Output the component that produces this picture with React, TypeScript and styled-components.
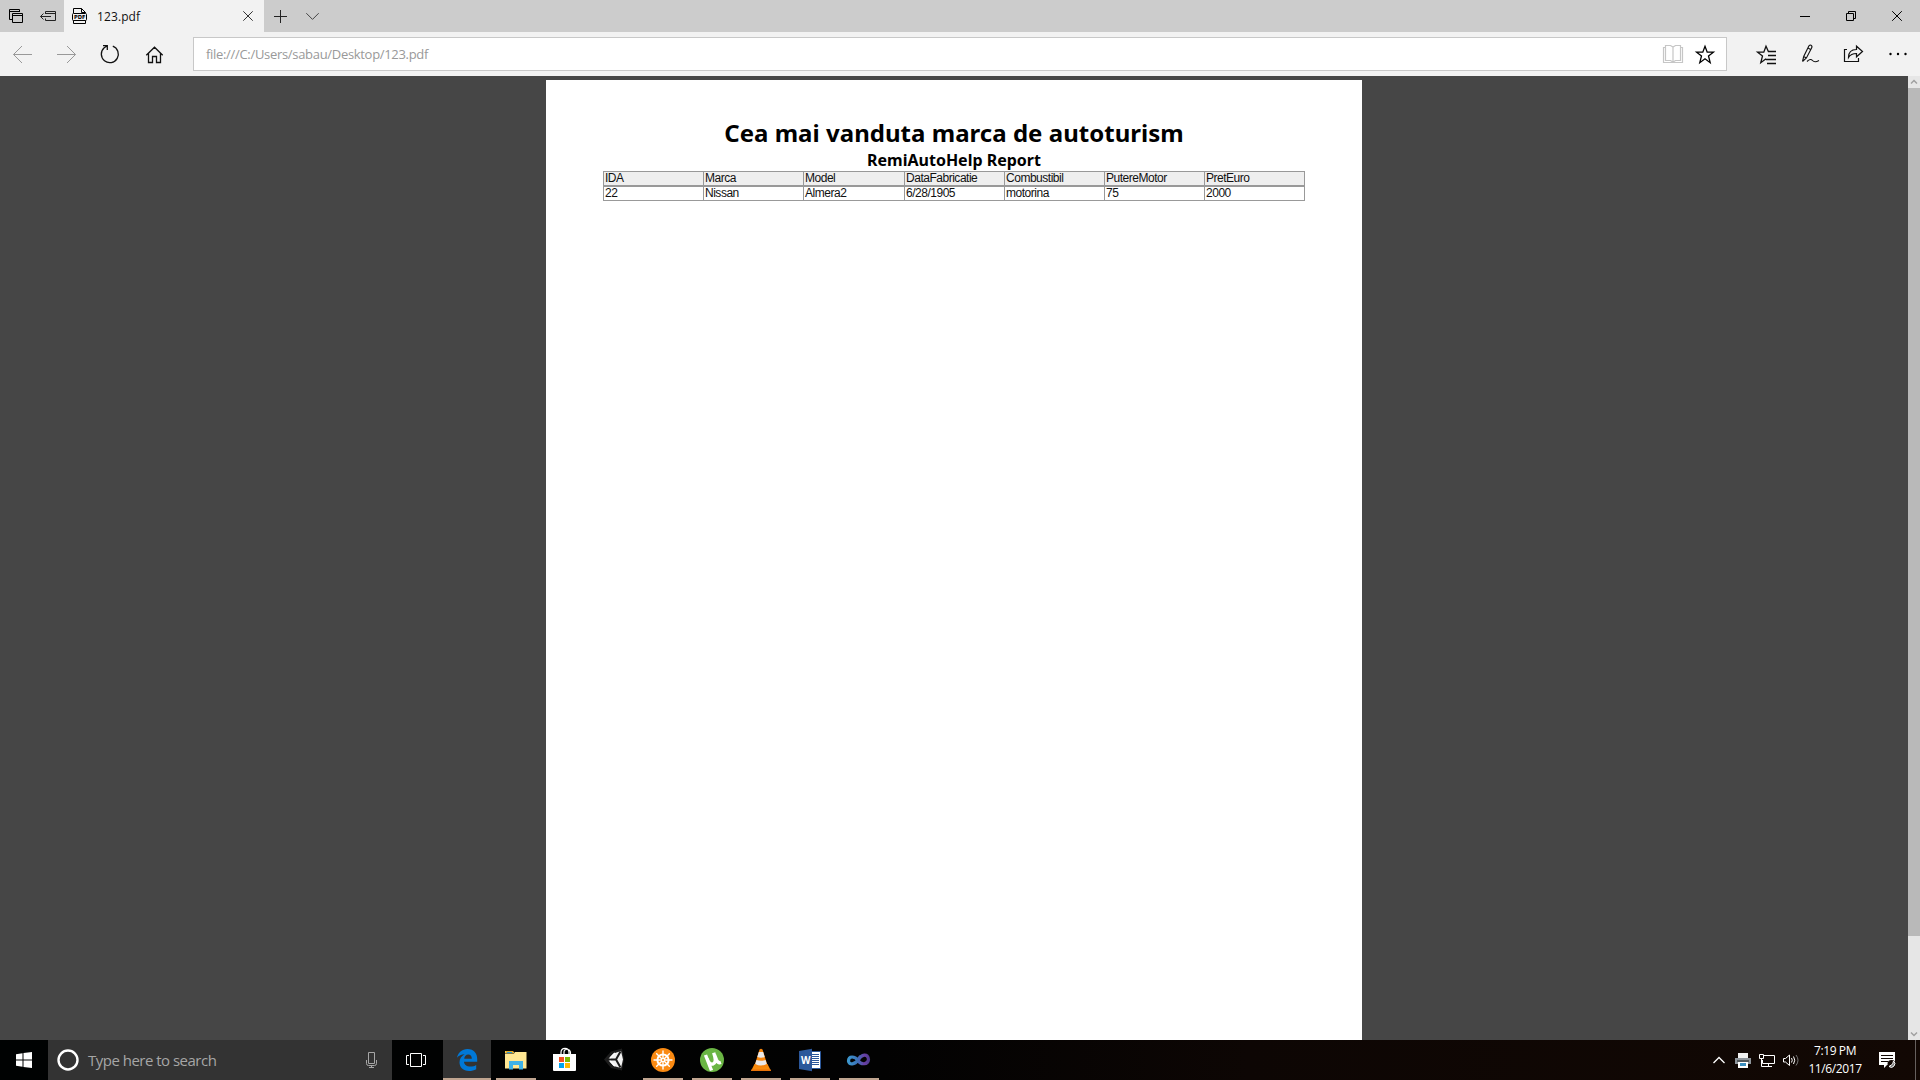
import React from "react";
import styled, { createGlobalStyle } from "styled-components";

const Global = createGlobalStyle`
  html, body { margin: 0; padding: 0; overflow: hidden; background: #464646; }
  * { box-sizing: border-box; }
`;

const ui = `"Open Sans", "Noto Sans", sans-serif`;

const Screen = styled.div`
  width: 1920px;
  height: 1080px;
  display: flex;
  flex-direction: column;
  font-family: ${ui};
  overflow: hidden;
`;

const Art = styled.svg`
  display: block;
  flex: none;
`;

/* Each glyph is drawn in screen coordinates; the view box selects its slot. */
const Glyph = ({ x, y, w, h, children }: { x: number; y: number; w: number; h: number; children: React.ReactNode }) => (
  <Art width={w} height={h} viewBox={`${x} ${y} ${w} ${h}`} fill="none">
    {children}
  </Art>
);

const TabStrip = styled.header`
  height: 32px;
  flex: none;
  display: flex;
  background: #cccccc;
`;

const Tab = styled.div`
  width: 200px;
  display: flex;
  align-items: center;
  background: #f2f2f2;
`;

const TabTitle = styled.span`
  flex: 1;
  font-size: 12px;
  line-height: 16px;
  padding-top: 1px;
  margin-left: -1px;
  letter-spacing: 0.1px;
  color: #111;
  white-space: nowrap;
`;

const Spacer = styled.div`
  flex: 1;
`;

const Toolbar = styled.nav`
  height: 44px;
  flex: none;
  display: flex;
  align-items: center;
  background: #f2f2f2;
`;

const AddressBar = styled.div`
  width: 1534px;
  height: 34px;
  margin: 0 7px 0 17px;
  padding-left: 12px;
  display: flex;
  align-items: center;
  background: #fff;
  border: 1px solid #c8c8c8;
`;

const Url = styled.span`
  flex: 1;
  font-size: 13px;
  line-height: 18px;
  letter-spacing: -0.31px;
  color: #999;
  white-space: nowrap;
`;

const Viewer = styled.main`
  height: 964px;
  flex: none;
  display: flex;
  background: #464646;
`;

const Canvas = styled.div`
  flex: 1;
  display: flex;
  justify-content: center;
  padding-top: 4px;
`;

const Sheet = styled.article`
  width: 816px;
  height: 960px;
  background: #fff;
  display: flex;
  flex-direction: column;
  align-items: center;
  padding-top: 37px;
`;

const Title = styled.h1`
  margin: 0;
  height: 33px;
  font: bold 24px/32px "Noto Sans", sans-serif;
  letter-spacing: 0.03px;
  color: #000;
  white-space: nowrap;
`;

const Subtitle = styled.h2`
  margin: 0;
  height: 21px;
  font: bold 16px/21px "Noto Sans", sans-serif;
  color: #000;
  white-space: nowrap;
`;

const Table = styled.div`
  width: 702px;
  display: flex;
  flex-direction: column;
`;

const Row = styled.div<{ $head?: boolean }>`
  display: grid;
  grid-template-columns: 100px 100px 101px 100px 100px 100px 100px;
  height: 15px;
  background: ${(p) => (p.$head ? "#efefef" : "#fff")};
  box-shadow: inset 0 1px #999, inset 1px 0 #999, inset 0 -1px #999;
  padding: 1px 0 1px 1px;
`;

const Cell = styled.span`
  border-right: 1px solid #999;
  padding-left: 1px;
  font: 12px/13px "Liberation Sans", Arial, sans-serif;
  letter-spacing: -0.48px;
  color: #111;
  white-space: nowrap;
`;

const ScrollTrack = styled.div`
  width: 12px;
  display: flex;
  flex-direction: column;
  justify-content: space-between;
  background: #e6e6e6;
`;

const ScrollThumb = styled.div`
  height: 848px;
  background: #b9b9b9;
  margin-bottom: auto;
`;

const Taskbar = styled.footer`
  height: 40px;
  flex: none;
  display: flex;
  background: linear-gradient(90deg, #000202 0%, #020202 46%, #0d0604 65%, #120804 100%);
`;

const SearchBox = styled.div`
  width: 344px;
  display: flex;
  align-items: center;
  background: #333;
`;

const SearchHint = styled.span`
  flex: 1;
  font-size: 15px;
  line-height: 20px;
  letter-spacing: -0.51px;
  color: #a6a6a6;
  white-space: nowrap;
`;

const AppButton = styled.div<{ $active?: boolean; $running?: boolean }>`
  width: 48px;
  margin-right: 1px;
  display: flex;
  flex-direction: column;
  align-items: flex-start;
  background: ${(p) => (p.$active ? "#333" : "transparent")};
  &::after {
    content: "";
    display: ${(p) => (p.$active || p.$running ? "block" : "none")};
    width: ${(p) => (p.$active ? 48 : 40)}px;
    height: 2px;
    margin-left: ${(p) => (p.$active ? 0 : 4)}px;
    background: #c0a590;
  }
`;

const Clock = styled.div`
  width: 70px;
  display: flex;
  flex-direction: column;
  align-items: center;
  padding-top: 2px;
  font-size: 12px;
  line-height: 18px;
  letter-spacing: -0.4px;
  color: #fff;
  white-space: nowrap;
`;

const ShowDesktop = styled.div`
  width: 5px;
  border-left: 1px solid #66605e;
`;

const header = ["IDA", "Marca", "Model", "DataFabricatie", "Combustibil", "PutereMotor", "PretEuro"];
const record = ["22", "Nissan", "Almera2", "6/28/1905", "motorina", "75", "2000"];

const BrowserTabs = () => (
  <TabStrip>
    <Glyph x={0} y={0} w={32} h={32}>
      <path d="M12 19.5H9.5V9.5H19.5V12M9 11.5H20M22.5 13.5H12.5V22.5H22.5ZM12 15.5H23" stroke="#000" />
    </Glyph>
    <Glyph x={32} y={0} w={32} h={32}>
      <path d="M45.500 14V11.500H55.500V20.500H45.500V18.500M45.500 13.500H55.500M40.500 16.500H51M43.500 13.500L40.500 16.500L43.500 19.500" stroke="#222" />
    </Glyph>
    <Tab>
      <Glyph x={64} y={0} w={34} h={32}>
        <path d="M73.500 13V8.500H81.500L85.500 12.500V13M81.500 8.500V12.500H85.500M73.500 20V23.500H85.500V20" stroke="#000" />
        <rect x="72.500" y="13.500" width="14" height="7" rx="1" fill="#f2f2f2" stroke="#000" />
        <text x="74" y="19.200" fontSize="5.6" fontWeight="bold" fontFamily="DejaVu Sans" textLength="11.500" lengthAdjust="spacingAndGlyphs" fill="#000">PDF</text>
      </Glyph>
      <TabTitle>123.pdf</TabTitle>
      <Glyph x={232} y={0} w={32} h={32}>
        <path d="M243.300 11.300L252.700 20.700M252.700 11.300L243.300 20.700" stroke="#333" />
      </Glyph>
    </Tab>
    <Glyph x={264} y={0} w={33} h={32}>
      <path d="M274 16.500H287M280.500 10V23" stroke="#222" />
    </Glyph>
    <Glyph x={297} y={0} w={31} h={32}>
      <path d="M306.300 13.200L312.500 19.400L318.700 13.200" stroke="#444" />
    </Glyph>
    <Spacer />
    <Glyph x={1782} y={0} w={46} h={32}>
      <path d="M1800 16.500H1810" stroke="#000" />
    </Glyph>
    <Glyph x={1828} y={0} w={46} h={32}>
      <path d="M1846.500 13.500H1853.500V20.500H1846.500ZM1848.500 13V11.500H1855.500V18.500H1854" stroke="#000" />
    </Glyph>
    <Glyph x={1874} y={0} w={46} h={32}>
      <path d="M1892.200 11.200L1901.800 20.800M1901.800 11.200L1892.200 20.800" stroke="#000" />
    </Glyph>
  </TabStrip>
);

const NavigationBar = () => (
  <Toolbar>
    <Glyph x={0} y={32} w={44} h={44}>
      <path d="M13.500 54.500H32M22 46L13.500 54.500L22 63" stroke="#999" />
    </Glyph>
    <Glyph x={44} y={32} w={44} h={44}>
      <path d="M57 54.500H75.500M67 46L75.500 54.500L67 63" stroke="#999" />
    </Glyph>
    <Glyph x={88} y={32} w={44} h={44}>
      <path d="M112.800 46.200A8.500 8.500 0 1 1 104.200 47.800L106.600 46.200M103 45.700H107.300V50" stroke="#111" strokeWidth="1.300" />
    </Glyph>
    <Glyph x={132} y={32} w={44} h={44}>
      <path d="M146.300 55.300L154.500 47.200L162.700 55.300M148.500 53.500V62.500H152.500V56.500H156.500V62.500H160.500V53.500" stroke="#111" strokeWidth="1.300" />
    </Glyph>
    <AddressBar>
      <Url>file:///C:/Users/sabau/Desktop/123.pdf</Url>
      <Glyph x={1656} y={38} w={33} h={32}>
        <path d="M1665 47.500H1663.500V62.500H1682.500V47.500H1681M1665.500 45.500H1670.500L1673 47L1675.500 45.500H1680.500V60.500H1675.500L1673 62L1670.500 60.500H1665.500ZM1673 47V62" stroke="#c6c6c6" strokeWidth="1.200" />
      </Glyph>
      <Glyph x={1689} y={38} w={37} h={32}>
        <path d="M1705 46.300L1707.200 52.200H1713.400L1708.500 56L1710.200 62.700L1705 58.800L1699.800 62.700L1701.500 56L1696.600 52.200H1702.800Z" stroke="#000" strokeWidth="1.300" />
      </Glyph>
    </AddressBar>
    <Glyph x={1734} y={32} w={54} h={44}>
      <path d="M1776 51.500H1768.400L1766 46.300L1763.800 52.200H1757.600L1762.500 56L1760.800 62.700L1766 58.800M1768 55.500H1776M1766 59.500H1776M1767 63.500H1776" stroke="#111" strokeWidth="1.300" />
    </Glyph>
    <Glyph x={1788} y={32} w={44} h={44}>
      <path d="M1802.500 61.500L1803.700 56.500L1808.600 46.500Q1809.600 44.500 1811 45.300Q1812.600 46.200 1811.600 48L1806.400 58L1802.500 61.500M1803.700 56.500L1806.400 58M1808 48L1810.600 49.400M1807 61.500Q1810.500 58 1812.500 60.500T1819 60.500" stroke="#111" strokeWidth="1.100" />
    </Glyph>
    <Glyph x={1832} y={32} w={44} h={44}>
      <path d="M1847 49.500H1844.500V61.500H1858.500V58M1848.500 57.500C1848.500 52 1851.500 49.500 1856.500 49.500V46.200L1862.500 51.500L1856.500 56.800V53.500C1852.500 53.500 1850 55 1848.500 57.500Z" stroke="#111" strokeWidth="1.200" />
    </Glyph>
    <Glyph x={1876} y={32} w={44} h={44}>
      <g fill="#000">
        <circle cx="1890.500" cy="54" r="1.200" />
        <circle cx="1898" cy="54" r="1.200" />
        <circle cx="1905.500" cy="54" r="1.200" />
      </g>
    </Glyph>
  </Toolbar>
);

const StartMenu = () => (
  <Glyph x={0} y={1040} w={48} h={40}>
    <path fill="#fff" d="M16 1054.200L22.500 1053.300V1059.500H16ZM23.500 1053.100L32 1052V1059.500H23.500ZM16 1060.500H22.500V1066.700L16 1065.800ZM23.500 1060.500H32V1068L23.500 1066.900Z" />
  </Glyph>
);

const EdgeIcon = () => (
  <Glyph x={443} y={1040} w={48} h={38}>
    <path
      fill="#0078d7"
      d="M457 1057.800C458 1052.500 462 1049 467.500 1049C474 1049 477.200 1053.500 477.200 1059V1061.800H464C464.200 1065 467 1066.600 470.300 1066.600C472.700 1066.600 474.700 1065.900 476.200 1065V1069.200C474.200 1070.400 471.700 1071 469 1071C463.200 1071 459.500 1067.300 459.500 1062.300C459.500 1058.600 461.500 1055.700 464.700 1054.200C461.500 1054.300 458.700 1055.600 457 1057.800ZM464.200 1058.700H471.800C471.800 1056.300 470.700 1054.500 468.200 1054.500C466 1054.500 464.500 1056.300 464.200 1058.700Z"
    />
  </Glyph>
);

const ExplorerIcon = () => (
  <Glyph x={492} y={1040} w={48} h={38}>
    <path fill="#f7c64a" d="M505 1051H513L514.500 1053H505Z" />
    <path fill="#ffe793" d="M505 1053.500H514L515 1052H526.500V1068.500H505Z" />
    <path fill="#e4ab25" d="M506 1051H513V1053H506Z" />
    <path fill="#2a9bd6" d="M507 1052H512V1053H507Z" />
    <path fill="#3eb2e8" d="M509 1061H523V1069.500H519V1065H513V1069.500H509Z" />
  </Glyph>
);

const StoreIcon = () => (
  <Glyph x={541} y={1040} w={48} h={38}>
    <path d="M561 1054V1052.500C561 1047 569 1047 569 1052.500V1054M564 1054V1052C564 1048 571 1048 570.500 1054" stroke="#fff" strokeWidth="1.200" />
    <path fill="#fff" d="M553 1054H576V1070Q576 1071 575 1071H554Q553 1071 553 1070Z" />
    <path fill="#f25022" d="M559 1057H564V1062H559Z" />
    <path fill="#7fba00" d="M565 1057H570V1062H565Z" />
    <path fill="#00a4ef" d="M559 1063H564V1068H559Z" />
    <path fill="#ffb900" d="M565 1063H570V1068H565Z" />
  </Glyph>
);

const UnityIcon = () => (
  <Glyph x={590} y={1040} w={48} h={38}>
    <path fill="#1d1d1d" d="M604 1059.500L611 1051.500L622 1048.500L624 1059.500L622 1070.500L611 1068Z" />
    <path fill="#f2f2f2" d="M608 1059.500L613.500 1053.500L621 1051L623 1059.500L621 1068L613.500 1066Z" />
    <path d="M607 1059.500H616M616 1059.500L620.500 1051.500M616 1059.500L620.500 1067.500" stroke="#1b1b1b" strokeWidth="2" />
    <path d="M610 1061L615 1066M610 1058L615 1053" stroke="#fff" strokeWidth="1.500" />
  </Glyph>
);

const HelmIcon = () => (
  <Glyph x={639} y={1040} w={48} h={38}>
    <circle cx="663" cy="1060" r="12" fill="#fa8a12" />
    <circle cx="663" cy="1060" r="5.600" stroke="#fff" strokeWidth="2" />
    <circle cx="663" cy="1060" r="2.200" fill="#fff" />
    {[0, 45, 90, 135].map((a) => (
      <path key={a} d="M663 1051V1069" stroke="#fff" strokeWidth="1.400" strokeLinecap="round" transform={`rotate(${a} 663 1060)`} />
    ))}
    <circle cx="663" cy="1060" r="1" fill="#fa8a12" />
  </Glyph>
);

const TorrentIcon = () => (
  <Glyph x={688} y={1040} w={48} h={38}>
    <circle cx="712" cy="1060" r="12" fill="#6ab544" />
    <path d="M705.500 1055L711.500 1070.500M707 1058.500Q709.500 1065 713 1064Q717 1062.600 713.700 1052.800M714.500 1055L716.500 1060Q718 1063.500 721 1062.500" stroke="#fff" strokeWidth="3.400" />
  </Glyph>
);

const ConeIcon = () => (
  <Glyph x={737} y={1040} w={48} h={38}>
    <path fill="#f88b0c" d="M754.500 1064H767.500L771 1071H751Z" />
    <path fill="#e8730a" d="M751.300 1069.500H770.700L771 1071H751Z" />
    <path fill="#f5850d" d="M759.500 1049.500Q761 1048 762.500 1049.500L767.500 1065.500Q761 1069 754.500 1065.500Z" />
    <path fill="#e9e9e9" d="M758.800 1052H763.200L764.700 1057Q761 1058.300 757.300 1057ZM756.400 1060Q761 1061.500 765.600 1060L766.800 1064Q761 1067 755.200 1064Z" />
  </Glyph>
);

const WordIcon = () => (
  <Glyph x={786} y={1040} w={48} h={38}>
    <path fill="#fff" stroke="#2b579a" d="M811.500 1051.500H820.500V1068.500H811.500Z" />
    <path d="M812 1054.500H819M812 1056.500H819M812 1058.500H819M812 1060.500H819M812 1062.500H819M812 1064.500H819" stroke="#2b579a" />
    <path fill="#2b579a" d="M799 1051L812 1048.800V1071.200L799 1069Z" />
    <text x="801" y="1064" fontSize="10.500" fontWeight="bold" fontFamily="Open Sans" textLength="9.500" lengthAdjust="spacingAndGlyphs" fill="#fff">W</text>
  </Glyph>
);

const StudioIcon = () => (
  <Glyph x={835} y={1040} w={48} h={38}>
    <defs>
      <linearGradient id="loop" x1="847" x2="870" y1="1060" y2="1060" gradientUnits="userSpaceOnUse">
        <stop offset="0" stopColor="#3c9bd0" />
        <stop offset="0.450" stopColor="#3b72b8" />
        <stop offset="0.750" stopColor="#6a3fa5" />
        <stop offset="1" stopColor="#4c3a8d" />
      </linearGradient>
    </defs>
    <path d="M858 1060C855 1064.500 849 1065.500 848.500 1061C848.500 1055.500 855 1056 858 1060.500C861 1065 868 1065 868.500 1059.500C868 1053 861.500 1054 858 1060.500Z" stroke="url(#loop)" strokeWidth="3.200" />
  </Glyph>
);

const Tray = () => (
  <>
    <Glyph x={1704} y={1040} w={28} h={40}>
      <path d="M1713.500 1063L1719 1057.500L1724.500 1063" stroke="#fff" strokeWidth="1.300" />
    </Glyph>
    <Glyph x={1732} y={1040} w={24} h={40}>
      <path fill="#f1f1f1" d="M1738 1053H1748V1058H1738Z" />
      <path fill="#8e959b" d="M1735 1058H1751V1064H1735Z" />
      <path fill="#52585c" d="M1737 1060H1749V1062H1737Z" />
      <path fill="#fff" d="M1738 1062H1748V1068H1738Z" />
      <path fill="#3c8fc0" d="M1740 1063H1746V1066H1740Z" />
    </Glyph>
    <Glyph x={1756} y={1040} w={24} h={40}>
      <path d="M1764 1055.500H1774.500V1063.500H1762.500V1060M1768.500 1064V1066.500M1765 1066.500H1772M1759.500 1054.500H1763.500V1058.500H1759.500ZM1761.500 1058V1066.500H1765" stroke="#fff" />
    </Glyph>
    <Glyph x={1780} y={1040} w={20} h={40}>
      <path d="M1783.500 1058.500H1785.500L1789.500 1055V1065.500L1785.500 1062H1783.500ZM1791.500 1058Q1793 1060.200 1791.500 1062.500M1793.500 1056.500Q1796 1060.200 1793.500 1064" stroke="#fff" />
      <path d="M1796 1055Q1800 1060.200 1796 1065.500" stroke="#777" />
    </Glyph>
    <Clock>
      <span>7:19 PM</span>
      <span>11/6/2017</span>
    </Clock>
    <Glyph x={1870} y={1040} w={45} h={40}>
      <path fill="#fff" d="M1879 1052H1895V1065H1887L1884 1068V1065H1879Z" />
      <path d="M1881 1055.500H1893M1881 1058.500H1893M1881 1061.500H1888" stroke="#120804" />
      <circle cx="1891.500" cy="1064" r="4" fill="#120804" />
      <path d="M1889 1066.500A3.300 3.300 0 1 0 1893.500 1061Q1894 1064.500 1889 1066.500Z" fill="#777" stroke="#fff" />
    </Glyph>
    <ShowDesktop />
  </>
);

export default function App() {
  return (
    <Screen>
      <Global />
      <BrowserTabs />
      <NavigationBar />
      <Viewer>
        <Canvas>
          <Sheet>
            <Title>Cea mai vanduta marca de autoturism</Title>
            <Subtitle>RemiAutoHelp Report</Subtitle>
            <Table>
              <Row $head>
                {header.map((t) => (
                  <Cell key={t}>{t}</Cell>
                ))}
              </Row>
              <Row>
                {record.map((t) => (
                  <Cell key={t}>{t}</Cell>
                ))}
              </Row>
            </Table>
          </Sheet>
        </Canvas>
        <ScrollTrack>
          <Glyph x={1908} y={76} w={12} h={12}>
            <path d="M1911 83.500L1914 80.500L1917 83.500" stroke="#a0a0a0" strokeWidth="1.500" />
          </Glyph>
          <ScrollThumb />
          <Glyph x={1908} y={1028} w={12} h={12}>
            <path d="M1911 1032.500L1914 1035.500L1917 1032.500" stroke="#a0a0a0" strokeWidth="1.500" />
          </Glyph>
        </ScrollTrack>
      </Viewer>
      <Taskbar>
        <StartMenu />
        <SearchBox>
          <Glyph x={48} y={1040} w={40} h={40}>
            <circle cx="68" cy="1060" r="9.500" stroke="#fff" strokeWidth="2.400" />
          </Glyph>
          <SearchHint>Type here to search</SearchHint>
          <Glyph x={352} y={1040} w={40} h={40}>
            <path d="M368.500 1052.500H374.500V1063.500H368.500ZM366.500 1060V1063.500Q366.500 1065.500 368.500 1065.500H374.500Q376.500 1065.500 376.500 1063.500V1060M371.500 1065.500V1067.500M369 1067.500H374" stroke="#a6a6a6" />
          </Glyph>
        </SearchBox>
        <Glyph x={392} y={1040} w={51} h={40}>
          <path d="M410.500 1053.500H421.500V1066.500H410.500ZM409 1055.500H406.500V1064.500H409M423 1055.500H425.500V1064.500H423" stroke="#fff" />
        </Glyph>
        <AppButton $active><EdgeIcon /></AppButton>
        <AppButton $running><ExplorerIcon /></AppButton>
        <AppButton><StoreIcon /></AppButton>
        <AppButton><UnityIcon /></AppButton>
        <AppButton $running><HelmIcon /></AppButton>
        <AppButton $running><TorrentIcon /></AppButton>
        <AppButton $running><ConeIcon /></AppButton>
        <AppButton $running><WordIcon /></AppButton>
        <AppButton $running><StudioIcon /></AppButton>
        <Spacer />
        <Tray />
      </Taskbar>
    </Screen>
  );
}
